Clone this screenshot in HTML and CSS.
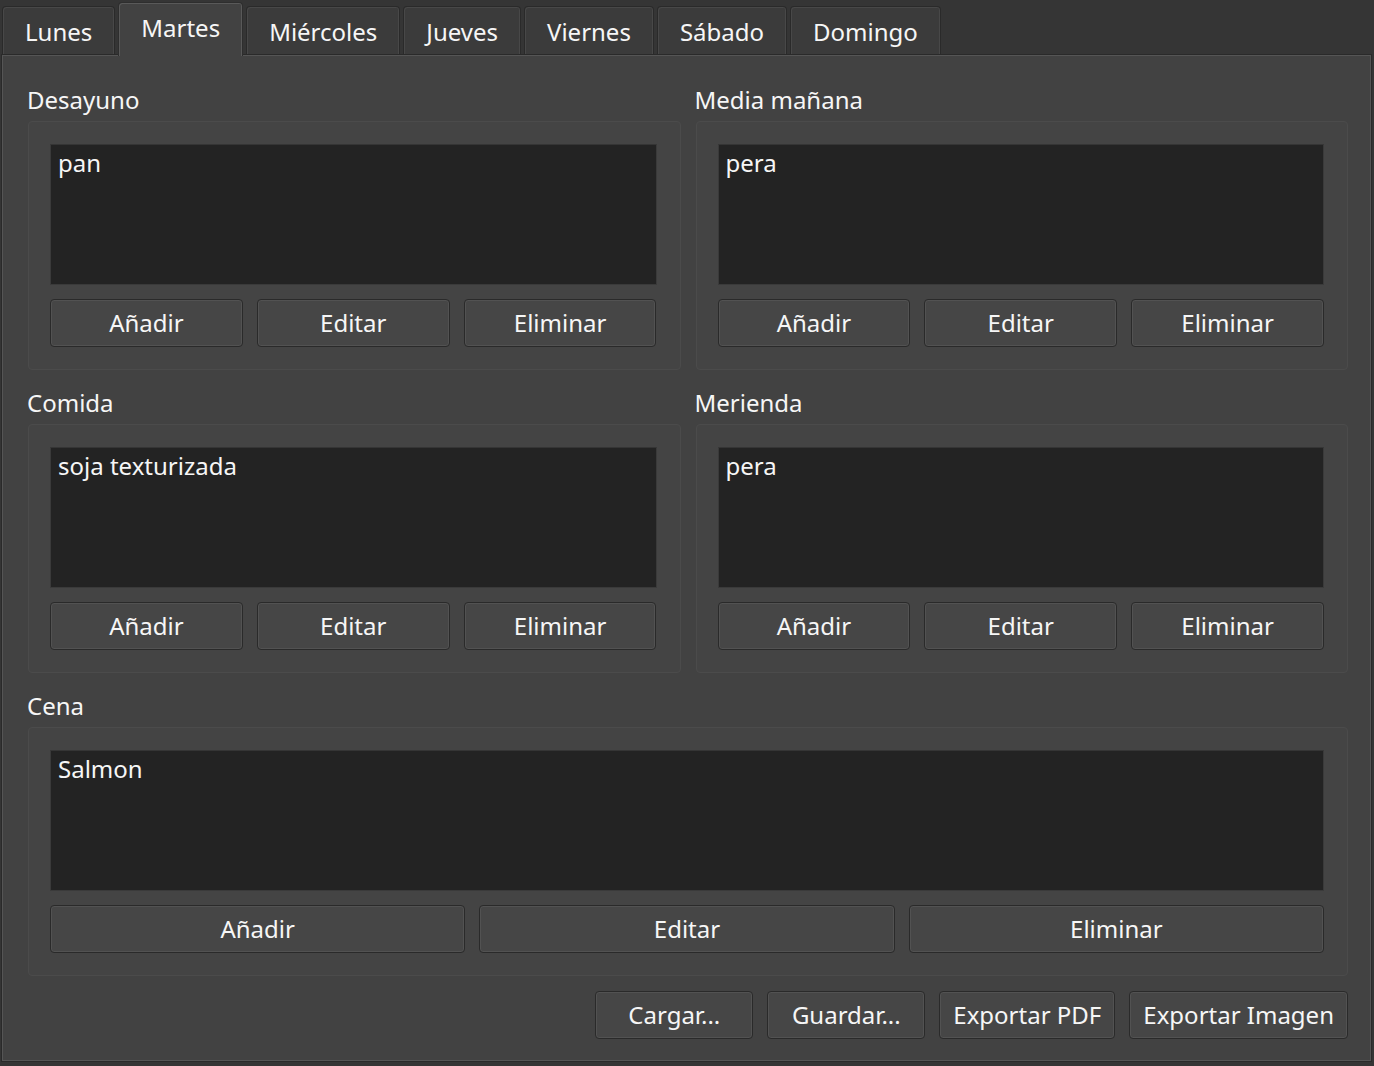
FILE: index.html
```html
<!DOCTYPE html>
<html lang="es">
<head>
<meta charset="utf-8">
<title>Menú semanal</title>
<link rel="stylesheet" href="styles.css">
</head>
<body>
<div class="window">
  <div class="tabs">
    <div class="tab">Lunes</div>
    <div class="tab active">Martes</div>
    <div class="tab">Miércoles</div>
    <div class="tab">Jueves</div>
    <div class="tab">Viernes</div>
    <div class="tab">Sábado</div>
    <div class="tab">Domingo</div>
  </div>
  <div class="pane">
    <div class="grid">
      <section class="meal">
        <div class="label">Desayuno</div>
        <div class="group">
          <div class="list">pan</div>
          <div class="buttons">
            <button class="btn">Añadir</button><button class="btn">Editar</button><button class="btn">Eliminar</button>
          </div>
        </div>
      </section>
      <section class="meal">
        <div class="label">Media mañana</div>
        <div class="group">
          <div class="list">pera</div>
          <div class="buttons">
            <button class="btn">Añadir</button><button class="btn">Editar</button><button class="btn">Eliminar</button>
          </div>
        </div>
      </section>
      <section class="meal">
        <div class="label">Comida</div>
        <div class="group">
          <div class="list">soja texturizada</div>
          <div class="buttons">
            <button class="btn">Añadir</button><button class="btn">Editar</button><button class="btn">Eliminar</button>
          </div>
        </div>
      </section>
      <section class="meal">
        <div class="label">Merienda</div>
        <div class="group">
          <div class="list">pera</div>
          <div class="buttons">
            <button class="btn">Añadir</button><button class="btn">Editar</button><button class="btn">Eliminar</button>
          </div>
        </div>
      </section>
      <section class="meal wide">
        <div class="label">Cena</div>
        <div class="group">
          <div class="list">Salmon</div>
          <div class="buttons">
            <button class="btn">Añadir</button><button class="btn">Editar</button><button class="btn">Eliminar</button>
          </div>
        </div>
      </section>
    </div>
    <div class="actions">
      <button class="btn act">Cargar...</button>
      <button class="btn act">Guardar...</button>
      <button class="btn act">Exportar PDF</button>
      <button class="btn act">Exportar Imagen</button>
    </div>
  </div>
</div>
</body>
</html>
```
FILE: styles.css
```css
html, body {
  margin: 0;
  padding: 0;
  background: #353535;
}
body {
  font-family: "Noto Sans", "Open Sans", sans-serif;
  font-size: 24px;
  color: #f6f6f6;
  width: 1374px;
  height: 1066px;
  overflow: hidden;
}
.window {
  display: flex;
  flex-direction: column;
}
.tabs {
  display: flex;
  align-items: flex-end;
  gap: 3px;
  height: 54px;
  padding-left: 2px;
}
.tab {
  box-sizing: border-box;
  height: 48px;
  padding: 3px 22px 0;
  display: flex;
  align-items: center;
  justify-content: center;
  background: #3b3b3b;
  border: 1px solid #2a2a2a;
  border-bottom: none;
  border-radius: 4px 4px 0 0;
  box-shadow: inset 1px 1px 0 #484848, inset -1px 0 0 #484848;
  line-height: 1;
}
.tab.active {
  height: 54px;
  margin-bottom: -2px;
  background: #424242;
  position: relative;
  z-index: 2;
  border-color: #2e2e2e;
  box-shadow: inset 1px 1px 0 #595959, inset -1px 0 0 #595959;
  padding-top: 2px;
  padding-bottom: 6px;
}
.pane {
  box-sizing: border-box;
  margin-left: 1px;
  width: 1371px;
  height: 1008px;
  background: #424242;
  border: 1px solid #2a2a2a;
  box-shadow: inset 0 0 0 1px #555555;
  padding: 28px 23px 0 26px;
  display: flex;
  flex-direction: column;
}
.grid {
  display: grid;
  grid-template-columns: 1fr 1fr;
  column-gap: 15px;
  row-gap: 16px;
}
.meal.wide {
  grid-column: 1 / 3;
}
.label {
  height: 38px;
  line-height: 33px;
  margin-left: -1px;
}
.group {
  box-sizing: border-box;
  height: 249px;
  background: #444444;
  border: 1px solid #4b4b4b;
  border-radius: 4px;
  padding: 22px 23px 0 21px;
  display: flex;
  flex-direction: column;
}
.list {
  box-sizing: border-box;
  height: 141px;
  background: #232323;
  border: 1px solid #3a3a3a;
  border-top-color: #353535;
  padding: 2px 7px;
  line-height: 32px;
}
.buttons {
  display: grid;
  grid-template-columns: 1fr 1fr 1fr;
  gap: 14px;
  margin-top: 14px;
}
.btn {
  box-sizing: border-box;
  height: 48px;
  font-family: "Noto Sans", "Open Sans", sans-serif;
  font-size: 24px;
  color: #f6f6f6;
  background: #464646;
  border: 1px solid #2a2a2a;
  border-radius: 4px;
  box-shadow: inset 0 0 0 1px #525252;
  padding: 0 13px;
  margin: 0;
  line-height: 1;
}
.actions {
  display: flex;
  justify-content: flex-end;
  gap: 14px;
  margin-top: 15px;
}
.btn.act {
  min-width: 158px;
}
```
